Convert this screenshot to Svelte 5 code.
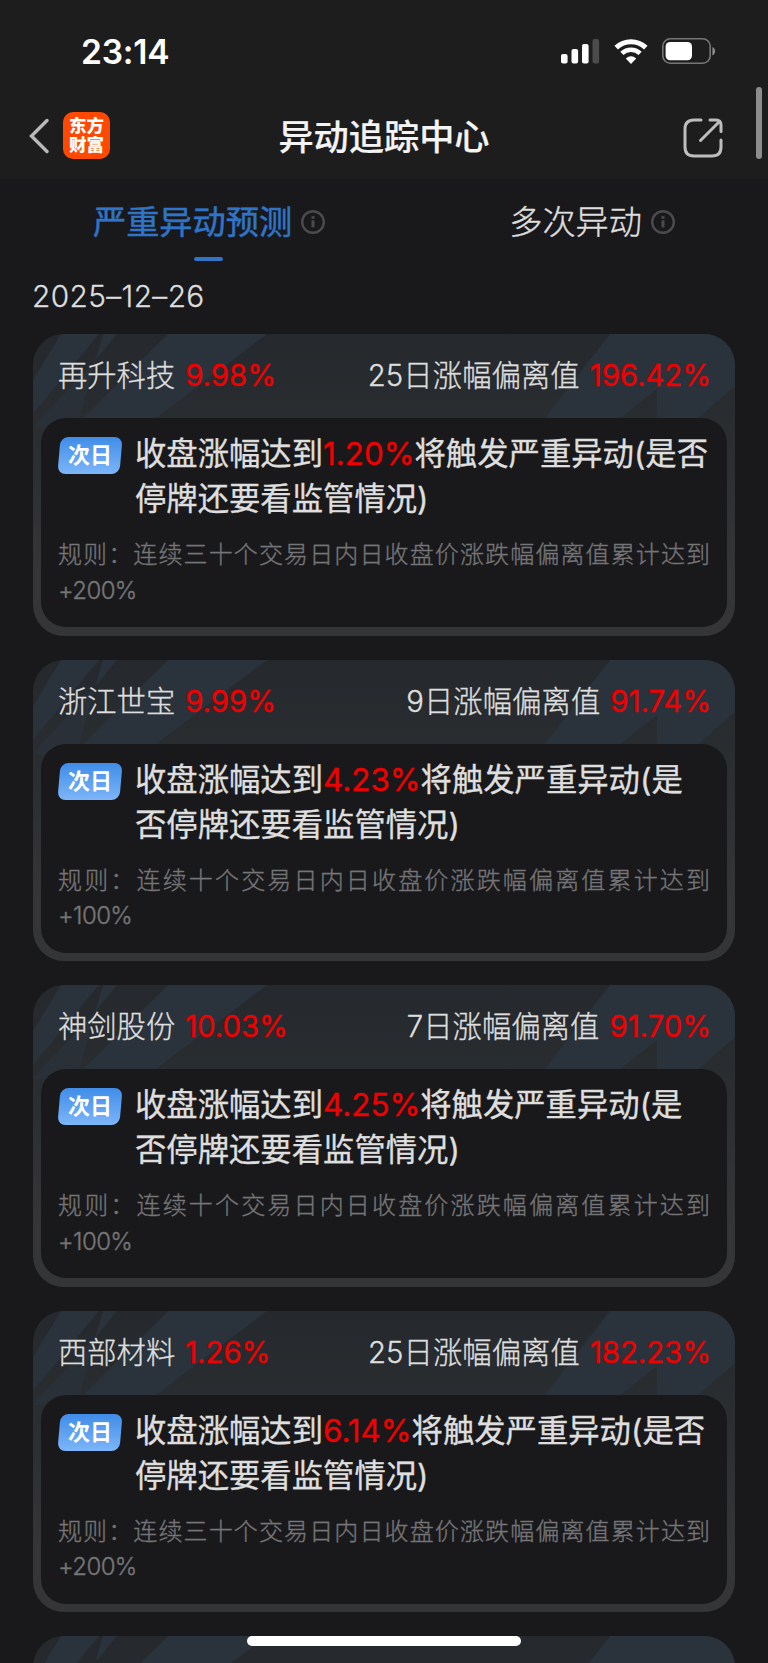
<script lang="ts">
  interface Stock {
    name: string;
    change: string;
    days: number;
    deviation: string;
    trigger: string;
    period: string;
    limit: string;
  }

  const stocks: Stock[] = [
    { name: '再升科技', change: '9.98%', days: 25, deviation: '196.42%', trigger: '1.20%', period: '三十', limit: '+200%' },
    { name: '浙江世宝', change: '9.99%', days: 9, deviation: '91.74%', trigger: '4.23%', period: '十', limit: '+100%' },
    { name: '神剑股份', change: '10.03%', days: 7, deviation: '91.70%', trigger: '4.25%', period: '十', limit: '+100%' },
    { name: '西部材料', change: '1.26%', days: 25, deviation: '182.23%', trigger: '6.14%', period: '三十', limit: '+200%' },
  ];
</script>

{#snippet infoIcon()}
  <svg class="info" viewBox="0 0 24 24" fill="none" stroke="#4b4b4d">
    <circle cx="12" cy="12" r="10.8" stroke-width="2.4" />
    <path d="M12 10.4v7" stroke-width="3" />
    <path d="M12 6.2v2.6" stroke-width="3" />
  </svg>
{/snippet}

{#snippet pattern()}
  <svg class="pattern" viewBox="0 0 702 100" fill="#2a323b">
    <path d="M28 0H66L0 80V46Z" />
    <path d="M70 0H84L62 27Z" />
    <path d="M62 27L44 94H0L8 84Z" fill="#293038" />
    <path d="M135 0H234L110 94H40Z" />
    <path d="M577 0H702V52L654 94H624V55L575 94H504Z" />
  </svg>
{/snippet}

<div class="screen">
  <header>
    <div class="status">
      <span class="time">23:14</span>
      <div class="status-icons">
        <svg width="39" height="25" viewBox="0 0 39 25" fill="#fff">
          <rect x="0" y="15" width="6.6" height="9.5" rx="2" />
          <rect x="10.5" y="10" width="6.6" height="14.5" rx="2" />
          <rect x="21" y="5" width="6.6" height="19.5" rx="2" />
          <rect x="31.5" y="0" width="6.6" height="24.5" rx="2" fill="#4b4b4b" />
        </svg>
        <svg class="wifi" width="34" height="25" viewBox="0 0 34 25" fill="none" stroke="#fff">
          <path d="M2.2 8.6A21.4 21.4 0 0 1 31.8 8.6" stroke-width="5" />
          <path d="M7.9 14.4A13.2 13.2 0 0 1 26.1 14.4" stroke-width="4.6" />
          <path d="M17 25L11.8 19.6Q17 15 22.2 19.6Z" fill="#fff" stroke="none" />
        </svg>
        <svg width="54" height="26" viewBox="0 0 54 26">
          <rect x=".8" y=".8" width="47.4" height="24.4" rx="7.5" fill="none" stroke="#767676" stroke-width="1.6" />
          <rect x="3.6" y="4" width="26.4" height="18.2" rx="4.5" fill="#fff" />
          <path d="M50.4 9v8.4c3.6-1.2 3.6-7.2 0-8.4Z" fill="#8b8b8b" />
        </svg>
      </div>
    </div>
    <nav>
      <div class="back">
        <svg width="20" height="36" viewBox="0 0 20 36" fill="none" stroke="#b9b9b9" stroke-width="3.4" stroke-linecap="round">
          <path d="M18 2.5L2.5 18L18 33.5" />
        </svg>
        <div class="logo"><span>东方</span><span>财富</span></div>
      </div>
      <h1>异动追踪中心</h1>
      <svg class="share" width="40" height="40" viewBox="0 0 40 40" fill="none" stroke="#bdbdbd" stroke-width="3" stroke-linecap="round">
        <path d="M18 2H11Q2 2 2 11V29Q2 38 11 38H29Q38 38 38 29V22" />
        <path d="M27 2H33Q38 2 38 7V13.5" />
        <path d="M17.5 22.5L36 4" />
      </svg>
    </nav>
    <div class="scrollbar"></div>
  </header>

  <div class="tabs">
    <div class="tab active">
      <span class="tab-name">严重异动预测</span>
      {@render infoIcon()}
    </div>
    <div class="tab">
      <span class="tab-name">多次异动</span>
      {@render infoIcon()}
    </div>
  </div>

  <div class="date">2025–12–26</div>

  <main>
    {#each stocks as s}
      <section class="card">
        {@render pattern()}
        <div class="card-head">
          <span>{s.name}</span>
          <span class="num">{s.change}</span>
          <span class="label">{s.days}日涨幅偏离值</span>
          <span class="num">{s.deviation}</span>
        </div>
        <div class="card-body">
          <div class="alert">
            <div class="badge">次日</div>
            <p>收盘涨幅达到<em>{s.trigger}</em>将触发严重异动(是否停牌还要看监管情况)</p>
          </div>
          <p class="rule">规则：连续{s.period}个交易日内日收盘价涨跌幅偏离值累计达到<span class="limit">{s.limit}</span></p>
        </div>
      </section>
    {/each}
    <section class="card">{@render pattern()}</section>
  </main>

  <div class="home-bar"></div>
</div>

<style>
  :global(body) {
    background: #19191b;
  }

  .screen {
    position: relative;
    width: 768px;
    height: 1663px;
    overflow: hidden;
    background: #19191b;
    color: #dedede;
    font-family: Inter, 'Noto Sans CJK SC', sans-serif;
  }

  header {
    position: relative;
    height: 179px;
    background: #1d1d1d;
  }

  .status {
    display: flex;
    justify-content: space-between;
    align-items: center;
    height: 102px;
    padding: 0 52px 0 81px;
  }

  .time {
    padding-top: 1px;
    color: #fff;
    font-size: 33.5px;
    font-weight: 600;
    letter-spacing: -0.2px;
  }

  .status-icons {
    display: flex;
    align-items: center;
  }

  .wifi {
    margin: 0 14px 0 14px;
  }

  nav {
    display: flex;
    justify-content: space-between;
    align-items: center;
    height: 68px;
    padding: 0 45px 0 29px;
  }

  .back {
    display: flex;
    align-items: center;
    gap: 14px;
    width: 82px;
  }

  .logo {
    display: flex;
    flex-direction: column;
    justify-content: center;
    align-items: center;
    box-sizing: border-box;
    width: 47px;
    height: 47px;
    margin-top: -1px;
    padding-bottom: 1px;
    flex: none;
    border-radius: 10px;
    background: #ff4800;
    color: #fff;
    font-size: 17.5px;
    font-weight: 900;
    line-height: 19px;
  }

  h1 {
    margin: -3px 0 0 8px;
    color: #f4f4f4;
    font-size: 35.2px;
    font-weight: 500;
    -webkit-text-stroke: 0.2px;
  }

  .share {
    margin: 4px 0 0 34px;
  }

  .scrollbar {
    position: absolute;
    top: 87px;
    right: 6px;
    width: 6px;
    height: 72px;
    border-radius: 3px;
    background: #8c8c8c;
  }

  .tabs {
    display: flex;
    justify-content: space-between;
    height: 82px;
    padding: 0 93px 0 93px;
  }

  .tab {
    position: relative;
    display: flex;
    align-items: center;
    gap: 9px;
    height: 86px;
    font-size: 33.2px;
    font-weight: 300;
    -webkit-text-stroke: 0.4px;
  }

  .tab-name {
    margin-top: -6px;
  }

  .active {
    color: #2f74c6;
    font-weight: 400;
    -webkit-text-stroke: 0.5px;
  }

  .active::after {
    content: '';
    position: absolute;
    left: 101px;
    top: 78px;
    width: 29px;
    height: 4px;
    border-radius: 2px;
    background: #2f74c6;
  }

  .info {
    width: 24px;
    height: 24px;
  }

  .date {
    height: 73px;
    padding-left: 32px;
    font-size: 29.8px;
    font-weight: 300;
    letter-spacing: 0.4px;
    line-height: 70px;
    -webkit-text-stroke: 0.3px;
  }

  main {
    display: flex;
    flex-direction: column;
    gap: 24px;
    padding: 0 33px;
  }

  .card {
    position: relative;
    box-sizing: border-box;
    flex: none;
    height: 301.5px;
    padding: 0 8px 8px;
    border-radius: 31px;
    background: linear-gradient(#25292d, #2a2e31 35%, #343537 80%);
    overflow: hidden;
  }

  .pattern {
    position: absolute;
    left: 0;
    top: 0;
    width: 702px;
    height: 100px;
  }

  .card-head {
    position: relative;
    display: flex;
    align-items: baseline;
    box-sizing: border-box;
    gap: 10px;
    height: 84px;
    padding: 20px 16px 0 17px;
    font-size: 29.3px;
    font-weight: 300;
    line-height: 44px;
    -webkit-text-stroke: 0.35px;
  }

  .label {
    margin-left: auto;
    letter-spacing: 0.1px;
  }

  .num,
  em {
    color: #f00000;
    font-style: normal;
  }

  .num {
    font-weight: 400;
  }

  .card-body {
    position: relative;
    box-sizing: border-box;
    height: 209px;
    padding: 14px 17px 0;
    border-radius: 25px;
    background: #19191b;
  }

  .alert {
    display: flex;
    gap: 13px;
  }

  /* slanted tag, only the plate is skewed */
  .badge {
    position: relative;
    z-index: 0;
    width: 62px;
    height: 37px;
    margin: 5px 1px 0;
    flex: none;
    color: #fff;
    font-size: 22px;
    font-weight: 700;
    line-height: 37px;
    text-align: center;
  }

  .badge::before {
    content: '';
    position: absolute;
    inset: 0;
    z-index: -1;
    border-radius: 8px;
    background: linear-gradient(#3f8de8, #7db5f9);
    transform: skewX(-5deg);
  }

  p {
    margin: 0;
  }

  .alert p {
    font-size: 31.35px;
    line-height: 45px;
    -webkit-text-stroke: 0.35px;
  }

  .rule {
    margin-top: 15px;
    color: #757577;
    font-size: 24px;
    font-weight: 300;
    line-height: 35.5px;
    text-align: justify;
    -webkit-text-stroke: 0.35px;
  }

  .limit {
    letter-spacing: -0.6px;
  }

  .home-bar {
    position: absolute;
    left: 247px;
    bottom: 17px;
    width: 274px;
    height: 10px;
    border-radius: 5px;
    background: #fff;
  }
</style>
